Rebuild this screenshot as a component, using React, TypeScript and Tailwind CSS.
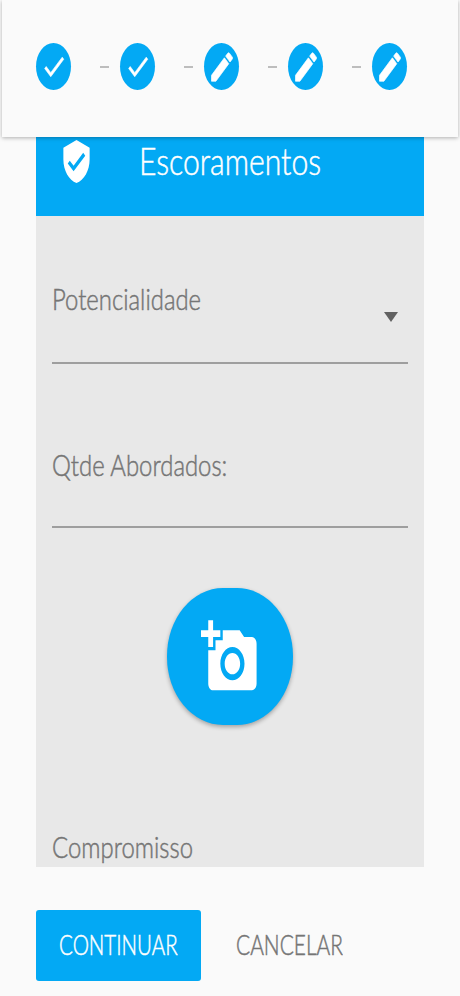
const DONE = 'M9 16.2L4.8 12l-1.4 1.4L9 19 21 7l-1.4-1.4L9 16.2z';
const EDIT =
  'M3 17.25V21h3.75L17.81 9.94l-3.75-3.75L3 17.25zM20.71 7.04a1 1 0 0 0 0-1.41l-2.34-2.34a1 1 0 0 0-1.41 0l-1.83 1.83 3.75 3.75 1.83-1.83z';
const SHIELD =
  'M12 1L3 5v6c0 5.55 3.84 10.74 9 12 5.16-1.26 9-6.45 9-12V5l-9-4zm-2 16l-4-4 1.41-1.41L10 14.17l6.59-6.59L18 9l-8 8z';
const CAMERA =
  'M3 4V1h2v3h3v2H5v3H3V6H0V4h3zm3 6V7h3V4h7l1.83 2H21c1.1 0 2 .9 2 2v12c0 1.1-.9 2-2 2H5c-1.1 0-2-.9-2-2V10h3zm7 9c2.76 0 5-2.24 5-5s-2.24-5-5-5-5 2.24-5 5 2.24 5 5 5zm-3.2-5c0 1.77 1.43 3.2 3.2 3.2s3.2-1.43 3.2-3.2-1.43-3.2-3.2-3.2-3.2 1.43-3.2 3.2z';

function Icon({ d, className }: { d: string; className: string }) {
  return (
    <svg viewBox="0 0 24 24" preserveAspectRatio="none" fill="currentColor" className={className}>
      <path d={d} />
    </svg>
  );
}

function Step({ done }: { done: boolean }) {
  return (
    <div className="flex h-[47px] w-[35px] shrink-0 items-center justify-center rounded-[50%] bg-[#03a9f4] text-white">
      {done ? (
        <Icon d={DONE} className="h-[35px] w-[26px] stroke-current stroke-[0.5]" />
      ) : (
        <Icon d={EDIT} className="h-[38px] w-[28px] stroke-current stroke-[0.5]" />
      )}
    </div>
  );
}

const steps = [true, true, false, false, false];

export default function App() {
  return (
    <div className="flex h-[996px] w-[460px] flex-col overflow-hidden bg-[#fafafa] font-['Lato',sans-serif] font-light whitespace-nowrap text-[#757575] [-webkit-text-stroke:0.5px]">
      <header className="relative z-10 mx-[2px] flex h-[137px] shrink-0 items-start bg-[#fafafa] pt-[43px] pl-[34px] shadow-[0_1px_4px_rgba(0,0,0,0.3)]">
        {steps.map((done, i) => (
          <div key={i} className="flex items-center">
            {i > 0 && <div className="mr-[11.5px] ml-[28.5px] h-[2px] w-[9px] bg-[#bdbdbd]" />}
            <Step done={done} />
          </div>
        ))}
      </header>

      <main className="mx-9 flex h-[730px] shrink-0 flex-col overflow-hidden bg-[#e8e8e8]">
        <div className="flex h-[79px] w-[388px] shrink-0 items-start bg-[#03a9f4] text-white">
          <Icon d={SHIELD} className="mt-px ml-[23px] h-[47px] w-[35px] shrink-0" />
          <h1 className="mt-[2px] ml-[44.5px] origin-left scale-x-[0.815] text-[37px] leading-[44px]">Escoramentos</h1>
        </div>

        <div className="mx-4 flex h-[148px] w-[356px] shrink-0 items-start justify-between border-b-2 border-[#9e9e9e] pt-[65px]">
          <span className="origin-left scale-x-[0.81] text-[29.5px] leading-9">Potencialidade</span>
          <svg viewBox="0 0 14 10" className="mt-[31px] mr-[10px] h-[10px] w-[14px]">
            <path d="M0 0h14L7 10z" fill="#616161" />
          </svg>
        </div>

        <div className="mx-4 flex h-[164px] w-[356px] shrink-0 items-start border-b-2 border-[#9e9e9e] pt-[83px]">
          <span className="origin-left scale-x-[0.81] text-[29.5px] leading-9">Qtde Abordados:</span>
        </div>

        <button className="mt-[60px] ml-[131px] flex h-[137px] w-[126px] shrink-0 rounded-[56px/68px] bg-[#03a9f4] pt-[29px] pl-[34px] text-white shadow-[0_2px_4px_rgba(0,0,0,0.3)]">
          <Icon d={CAMERA} className="h-[80px] w-[58px]" />
        </button>

        <div className="mt-[104px] ml-4 flex">
          <span className="origin-left scale-x-[0.81] text-[29.5px] leading-9">Compromisso</span>
        </div>
      </main>

      <footer className="mt-[43px] ml-9 flex shrink-0">
        <button className="flex h-[71px] w-[165px] rounded-[3px] bg-[#03a9f4] pt-[17px] pl-[23px] text-white">
          <span className="origin-left scale-x-[0.76] text-[27px] leading-9">CONTINUAR</span>
        </button>
        <button className="ml-[35px] flex pt-[17px]">
          <span className="origin-left scale-x-[0.775] text-[27px] leading-9">CANCELAR</span>
        </button>
      </footer>
    </div>
  );
}
